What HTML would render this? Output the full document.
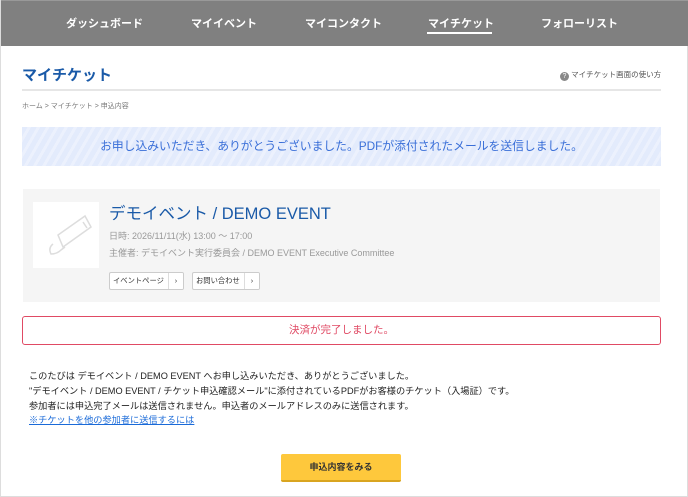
<!DOCTYPE html>
<html><head><meta charset="utf-8"><style>
*{margin:0;padding:0;box-sizing:border-box}
body{width:688px;height:497px;overflow:hidden;background:#fff;font-family:"Liberation Sans","Noto Sans CJK JP",sans-serif;position:relative;border-left:1px solid #ddd;border-right:1px solid #ddd;border-bottom:1px solid #ddd}
.nav{position:absolute;left:0;top:0;width:688px;height:46px;background:#808080;border-top:1px solid #999}
.nav span{position:absolute;top:14px;color:#fff;font-weight:bold;font-size:11px}
.a{position:absolute}
.b{white-space:nowrap;overflow:hidden}
</style></head><body>
<div class="nav">
<span style="left:65px">ダッシュボード</span>
<span style="left:190px">マイイベント</span>
<span style="left:304px">マイコンタクト</span>
<span style="left:427px">マイチケット</span>
<div class="a" style="left:426px;top:31px;width:65px;height:2px;background:#fff"></div>
<span style="left:540px">フォローリスト</span>
</div>
<div class="a" style="left:21px;top:64px;font-size:15px;font-weight:bold;color:#1a5aa8">マイチケット</div>
<div class="a" style="left:559px;top:69px;font-size:7.5px;color:#555"><span style="display:inline-block;width:9px;height:9px;border-radius:50%;background:#888;color:#fff;font-size:7px;text-align:center;line-height:9px;vertical-align:-1px">?</span> マイチケット画面の使い方</div>
<div class="a" style="left:21px;top:89px;width:639px;height:2px;background:#e6e6e6"></div>
<div class="a" style="left:21px;top:101px;font-size:7px;color:#777">ホーム &gt; マイチケット &gt; 申込内容</div>
<div class="a" style="left:21px;top:127px;width:639px;height:39px;background:repeating-linear-gradient(-60deg,#e3ebfc 0 5px,#ecf1fd 5px 8px);color:#3a6fd8;font-size:11.8px;text-align:center;line-height:39px">お申し込みいただき、ありがとうございました。PDFが添付されたメールを送信しました。</div>
<div class="a" style="left:22px;top:189px;width:637px;height:113px;background:#f5f5f5"></div>
<div class="a" style="left:32px;top:202px;width:66px;height:66px;background:#fff">
<svg width="66" height="66" viewBox="0 0 66 66" fill="none" stroke="#ddd" stroke-width="1.5"><path d="M30 45 L58 25 L52 14 L25 33 Z M50 20 l4 6"/><path d="M20 42 q-5 4 -2 10 q6 0 10 -4 l4 -3"/></svg></div>
<div class="a" style="left:108px;top:200px;font-size:16.5px;color:#1a5aa8">デモイベント / DEMO EVENT</div>
<div class="a" style="left:108px;top:229px;font-size:9px;color:#999">日時: 2026/11/11(水) 13:00 ～ 17:00</div>
<div class="a" style="left:108px;top:246px;font-size:9px;color:#999">主催者: デモイベント実行委員会 / DEMO EVENT Executive Committee</div>
<div class="a b" style="left:108px;top:272px;width:75px;height:18px;background:#fff;border:1px solid #ccc;border-radius:2px;font-size:7.3px;line-height:16px;padding-left:3px;color:#333">イベントページ<span style="position:absolute;right:0;top:0;width:15px;height:16px;border-left:1px solid #ddd;text-align:center;background:#fff">›</span></div>
<div class="a b" style="left:191px;top:272px;width:68px;height:18px;background:#fff;border:1px solid #ccc;border-radius:2px;font-size:7.3px;line-height:16px;padding-left:3px;color:#333">お問い合わせ<span style="position:absolute;right:0;top:0;width:15px;height:16px;border-left:1px solid #ddd;text-align:center;background:#fff">›</span></div>
<div class="a" style="left:21px;top:316px;width:639px;height:29px;border:1.5px solid #e04a64;border-radius:3px;color:#e04a64;font-size:10.5px;text-align:center;line-height:26px">決済が完了しました。</div>
<div class="a" style="left:28px;top:369px;font-size:9.2px;line-height:14.8px;color:#222">このたびは デモイベント / DEMO EVENT へお申し込みいただき、ありがとうございました。<br>"デモイベント / DEMO EVENT / チケット申込確認メール"に添付されているPDFがお客様のチケット（入場証）です。<br>参加者には申込完了メールは送信されません。申込者のメールアドレスのみに送信されます。<br><span style="color:#1a6ad8;text-decoration:underline">※チケットを他の参加者に送信するには</span></div>
<div class="a" style="left:280px;top:454px;width:120px;height:28px;background:#fec83c;border-bottom:2px solid #d9a520;border-radius:2px;font-size:9px;font-weight:bold;color:#333;text-align:center;line-height:27px">申込内容をみる</div>
</body></html>
